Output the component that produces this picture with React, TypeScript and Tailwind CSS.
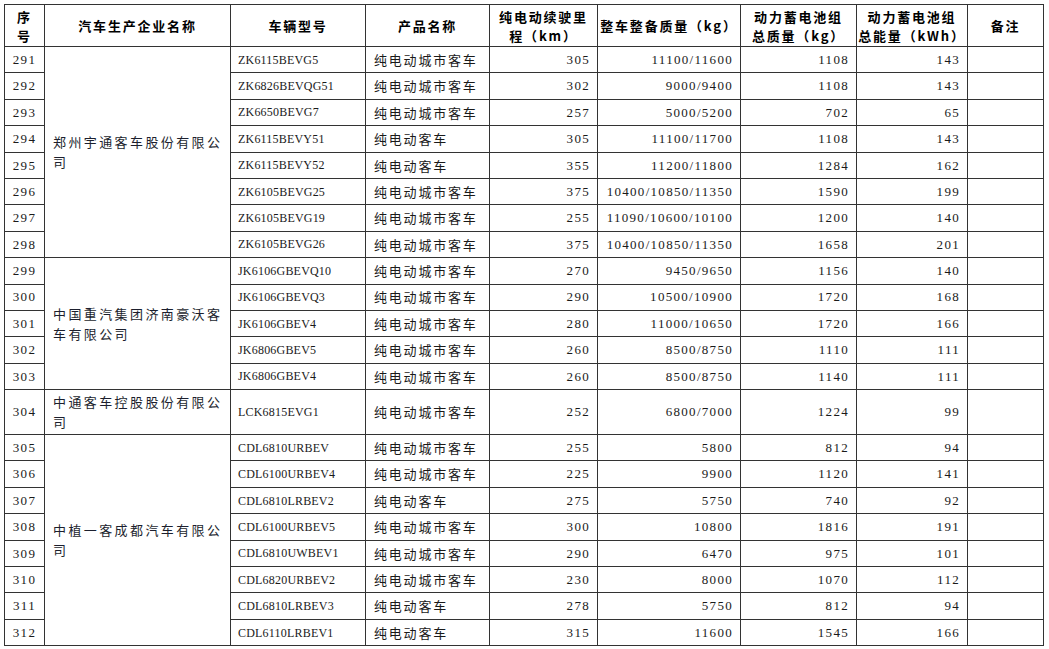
type Row = [string, string, string, string, string, string, string];

const groups: { company: string; rows: Row[] }[] = [
  {
    company: "郑州宇通客车股份有限公司",
    rows: [
      ["291", "ZK6115BEVG5", "纯电动城市客车", "305", "11100/11600", "1108", "143"],
      ["292", "ZK6826BEVQG51", "纯电动城市客车", "302", "9000/9400", "1108", "143"],
      ["293", "ZK6650BEVG7", "纯电动城市客车", "257", "5000/5200", "702", "65"],
      ["294", "ZK6115BEVY51", "纯电动客车", "305", "11100/11700", "1108", "143"],
      ["295", "ZK6115BEVY52", "纯电动客车", "355", "11200/11800", "1284", "162"],
      ["296", "ZK6105BEVG25", "纯电动城市客车", "375", "10400/10850/11350", "1590", "199"],
      ["297", "ZK6105BEVG19", "纯电动城市客车", "255", "11090/10600/10100", "1200", "140"],
      ["298", "ZK6105BEVG26", "纯电动城市客车", "375", "10400/10850/11350", "1658", "201"],
    ],
  },
  {
    company: "中国重汽集团济南豪沃客车有限公司",
    rows: [
      ["299", "JK6106GBEVQ10", "纯电动城市客车", "270", "9450/9650", "1156", "140"],
      ["300", "JK6106GBEVQ3", "纯电动城市客车", "290", "10500/10900", "1720", "168"],
      ["301", "JK6106GBEV4", "纯电动城市客车", "280", "11000/10650", "1720", "166"],
      ["302", "JK6806GBEV5", "纯电动城市客车", "260", "8500/8750", "1110", "111"],
      ["303", "JK6806GBEV4", "纯电动城市客车", "260", "8500/8750", "1140", "111"],
    ],
  },
  {
    company: "中通客车控股股份有限公司",
    rows: [["304", "LCK6815EVG1", "纯电动城市客车", "252", "6800/7000", "1224", "99"]],
  },
  {
    company: "中植一客成都汽车有限公司",
    rows: [
      ["305", "CDL6810URBEV", "纯电动城市客车", "255", "5800", "812", "94"],
      ["306", "CDL6100URBEV4", "纯电动城市客车", "225", "9900", "1120", "141"],
      ["307", "CDL6810LRBEV2", "纯电动客车", "275", "5750", "740", "92"],
      ["308", "CDL6100URBEV5", "纯电动城市客车", "300", "10800", "1816", "191"],
      ["309", "CDL6810UWBEV1", "纯电动城市客车", "290", "6470", "975", "101"],
      ["310", "CDL6820URBEV2", "纯电动城市客车", "230", "8000", "1070", "112"],
      ["311", "CDL6810LRBEV3", "纯电动客车", "278", "5750", "812", "94"],
      ["312", "CDL6110LRBEV1", "纯电动客车", "315", "11600", "1545", "166"],
    ],
  },
];

const cjk = "font-['Noto_Sans_CJK_SC',sans-serif]";
const serif = "font-['Liberation_Serif','Noto_Sans_CJK_SC',serif]";
// 数字：间距稍宽；车型代码：字母更窄
const num = `${serif} text-[13px] tracking-[1.3px]`;
const code = `${serif} text-[12px] tracking-[0.2px]`;
const cell = "border border-[#333] p-0 align-middle";
const th = `${cell} ${cjk} font-bold text-[13px] leading-[19px] tracking-[1.8px] text-center text-black`;

const App = () => {
  return (
    <div className="w-[1049px] h-[649px] bg-white pt-[4px] pl-[4px] overflow-hidden text-[#1a1a1a]">
      <table className="border-collapse table-fixed w-[1039px]">
        <colgroup>
          <col className="w-[40px]" />
          <col className="w-[186px]" />
          <col className="w-[135px]" />
          <col className="w-[124px]" />
          <col className="w-[108px]" />
          <col className="w-[143px]" />
          <col className="w-[116px]" />
          <col className="w-[111px]" />
          <col className="w-[76px]" />
        </colgroup>
        <thead>
          <tr className="h-[42px]">
            <th className={th}>
              序<br />号
            </th>
            <th className={th}>汽车生产企业名称</th>
            <th className={th}>车辆型号</th>
            <th className={th}>产品名称</th>
            <th className={th}>
              纯电动续驶里<br />程（km）
            </th>
            <th className={th}>整车整备质量（kg）</th>
            <th className={th}>
              动力蓄电池组<br />总质量（kg）
            </th>
            <th className={th}>
              动力蓄电池组<br />总能量（kWh）
            </th>
            <th className={th}>备注</th>
          </tr>
        </thead>
        <tbody>
          {groups.map((g) =>
            g.rows.map((r, i) => (
              <tr key={r[0]} className={g.rows.length === 1 ? "h-[45px]" : "h-[26.4px]"}>
                <td className={`${cell} ${num} text-center`}>{r[0]}</td>
                {i === 0 && (
                  <td
                    rowSpan={g.rows.length}
                    className={`${cell} ${cjk} text-[13px] leading-[20px] tracking-[2.4px] pl-[8px] pr-[4px] text-[#1c1f2e]`}
                  >
                    {g.company}
                  </td>
                )}
                <td className={`${cell} ${code} pl-[7px]`}>{r[1]}</td>
                <td className={`${cell} ${cjk} text-[13px] tracking-[1.8px] pl-[8px]`}>{r[2]}</td>
                <td className={`${cell} ${num} text-right pr-[7px]`}>{r[3]}</td>
                <td className={`${cell} ${num} text-right pr-[7px]`}>{r[4]}</td>
                <td className={`${cell} ${num} text-right pr-[7px]`}>{r[5]}</td>
                <td className={`${cell} ${num} text-right pr-[7px]`}>{r[6]}</td>
                <td className={cell}></td>
              </tr>
            ))
          )}
        </tbody>
      </table>
    </div>
  );
};

export default App;
